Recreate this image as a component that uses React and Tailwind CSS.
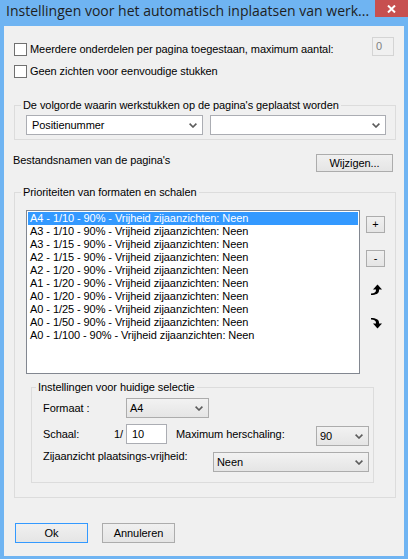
import React from 'react';

const items = [
  'A4 - 1/10 - 90% - Vrijheid zijaanzichten: Neen',
  'A3 - 1/10 - 90% - Vrijheid zijaanzichten: Neen',
  'A3 - 1/15 - 90% - Vrijheid zijaanzichten: Neen',
  'A2 - 1/15 - 90% - Vrijheid zijaanzichten: Neen',
  'A2 - 1/20 - 90% - Vrijheid zijaanzichten: Neen',
  'A1 - 1/20 - 90% - Vrijheid zijaanzichten: Neen',
  'A0 - 1/20 - 90% - Vrijheid zijaanzichten: Neen',
  'A0 - 1/25 - 90% - Vrijheid zijaanzichten: Neen',
  'A0 - 1/50 - 90% - Vrijheid zijaanzichten: Neen',
  'A0 - 1/100 - 90% - Vrijheid zijaanzichten: Neen',
];

function Chevron() {
  return (
    <svg width="8" height="5" viewBox="0 0 8 5" className="block shrink-0">
      <path d="M0.6 0.6 L4 4 L7.4 0.6" fill="none" stroke="#5c5c5c" strokeWidth="1.6" />
    </svg>
  );
}

function Combo({ value, white, className }) {
  return (
    <div
      className={`${
        white
          ? 'bg-white border-[#abadb3] pl-[5px]'
          : 'bg-gradient-to-b from-[#f2f2f2] to-[#e5e5e5] border-[#acacac] pl-[3px]'
      } border h-[20px] flex items-center pr-[5px] ${className}`}
    >
      <span className="flex-1 whitespace-nowrap">{value}</span>
      <Chevron />
    </div>
  );
}

function Check({ label }) {
  return (
    <label className="flex items-center">
      <span className="w-[13px] h-[13px] border border-[#707070] bg-white shrink-0"></span>
      <span className="ml-[3px] whitespace-nowrap">{label}</span>
    </label>
  );
}

function Btn({ children, className }) {
  return (
    <div
      className={`border bg-gradient-to-b from-[#f0f0f0] to-[#e5e5e5] flex items-center justify-center ${className}`}
    >
      {children}
    </div>
  );
}

export default function App() {
  return (
    <div className="w-[408px] h-[559px] bg-[#6fb4f2] flex flex-col font-['Liberation_Sans',Arial,sans-serif] text-[11px] leading-[13px] tracking-[-0.07px] text-black">
      {/* title bar */}
      <div className="h-[26px] flex items-start shrink-0">
        <div className="pl-[6px] pt-[1px] text-[14px] leading-[20px] tracking-normal text-[#1e1e1e] font-['Open_Sans',sans-serif] whitespace-nowrap">
          Instellingen voor het automatisch inplaatsen van werk...
        </div>
        <div className="ml-auto w-[33px] h-[17px] bg-[#c75050] flex items-center justify-center shrink-0">
          <svg width="9" height="8" viewBox="0 0 9 8">
            <path d="M1 0.5 L8 7.5 M8 0.5 L1 7.5" stroke="#fff" strokeWidth="2" />
          </svg>
        </div>
      </div>

      {/* client area */}
      <div className="mx-[4px] h-[530px] bg-[#f0f0f0] pt-[11px] flex flex-col">
        <div className="flex items-start h-[20px]">
          <div className="ml-[10px] mt-[6px]">
            <Check label="Meerdere onderdelen per pagina toegestaan, maximum aantal:" />
          </div>
          <div className="ml-auto mr-[10px] w-[22px] h-[19px] border border-[#d4d4d4] text-[#808080] pl-[3px] flex items-center">
            0
          </div>
        </div>
        <div className="ml-[10px] mt-[8px]">
          <Check label="Geen zichten voor eenvoudige stukken" />
        </div>

        <fieldset className="ml-[10px] w-[382px] border border-[#dcdcdc] pb-[4px] mt-[21px]">
          <legend className="ml-[6px] px-[2px]">De volgorde waarin werkstukken op de pagina's geplaatst worden</legend>
          <div className="flex gap-[7px] pl-[11px] mt-[3px]">
            <Combo white value="Positienummer" className="w-[177px]" />
            <Combo white value="" className="w-[176px]" />
          </div>
        </fieldset>

        <div className="flex items-start mt-[14px] pl-[9px] pr-[11px]">
          <span>Bestandsnamen van de pagina's</span>
          <Btn className="ml-auto w-[77px] h-[18px] border-[#acacac]">Wijzigen...</Btn>
        </div>

        <fieldset className="ml-[10px] w-[382px] border border-[#dcdcdc] pb-[14px] mt-[14px]">
          <legend className="ml-[6px] px-[2px]">Prioriteiten van formaten en schalen</legend>
          <div className="flex items-start pl-[11px] mt-[11px]">
            <div className="w-[334px] h-[164px] border border-[#828790] bg-white p-[1px]">
              {items.map((it, i) => (
                <div
                  key={i}
                  className={`h-[13px] pl-[2px] whitespace-nowrap ${i === 0 ? 'bg-[#3399ff] text-white' : ''}`}
                >
                  {it}
                </div>
              ))}
            </div>
            <div className="ml-[6px] mt-[6px] flex flex-col">
              <Btn className="w-[19px] h-[17px] border-[#acacac]">+</Btn>
              <Btn className="w-[19px] h-[17px] border-[#acacac] mt-[17px]">-</Btn>
              <svg width="13" height="11" viewBox="0 0 13 11" className="block ml-[4px] mt-[17px]">
                <path d="M3 5.5 L12 5.5 L7.5 0.5 Z" fill="#000" />
                <path d="M1 11 C6 11 9 9.5 9 6.5 V5 H6 V6 C6 8 4.5 9.5 1 9.5 Z" fill="#000" />
              </svg>
              <svg width="13" height="11" viewBox="0 0 13 11" className="block ml-[4px] mt-[23px]">
                <path d="M3 5.5 L12 5.5 L7.5 10.5 Z" fill="#000" />
                <path d="M1 0 C6 0 9 1.5 9 4.5 V6 H6 V5 C6 3 4.5 1.5 1 1.5 Z" fill="#000" />
              </svg>
            </div>
          </div>

          <fieldset className="ml-[16px] w-[343px] border border-[#dcdcdc] pb-[10px] mt-[7px]">
            <legend className="ml-[4px] px-[2px]">Instellingen voor huidige selectie</legend>
            <div className="pl-[11px] mt-[4px] flex items-center h-[20px]">
              <span className="w-[83px]">Formaat :</span>
              <Combo value="A4" className="w-[83px]" />
            </div>
            <div className="pl-[11px] mt-[6px] flex items-start h-[22px]">
              <div className="w-[80px] flex justify-between mt-[4px]">
                <span>Schaal:</span>
                <span>1/</span>
              </div>
              <div className="ml-[3px] w-[41px] h-[20px] border border-[#abadb3] bg-white pl-[5px] flex items-center">10</div>
              <span className="ml-[9px] mt-[4px]">Maximum herschaling:</span>
              <Combo value="90" className="ml-auto mr-[4px] mt-[2px] w-[53px]" />
            </div>
            <div className="pl-[11px] mt-[4px] flex items-start">
              <span>Zijaanzicht plaatsings-vrijheid:</span>
              <Combo value="Neen" className="ml-auto mr-[4px] mt-[2px] w-[156px]" />
            </div>
          </fieldset>
        </fieldset>

        <div className="flex mt-[25px] pl-[11px]">
          <Btn className="w-[73px] h-[20px] border-[#3399ff]">Ok</Btn>
          <Btn className="w-[73px] h-[20px] border-[#acacac] ml-[14px]">Annuleren</Btn>
        </div>
      </div>
    </div>
  );
}
